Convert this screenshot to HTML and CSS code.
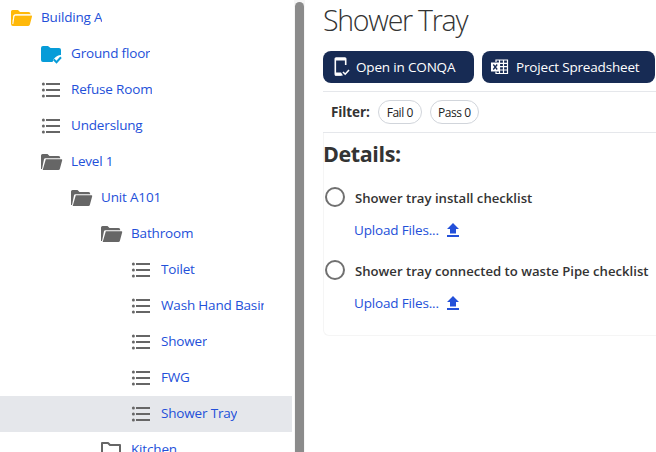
FILE: index.html
```html
<!DOCTYPE html>
<html lang="en">
<head>
<meta charset="utf-8">
<title>Shower Tray</title>
<link rel="stylesheet" href="styles.css">
</head>
<body>
<svg class="defs" width="0" height="0" aria-hidden="true">
  <symbol id="open" viewBox="0 .5 22 18"><path fill="currentColor" d="M0 15.500V2Q0 .500 1.500 .500H6.500L8.500 2.500H17.500Q19.300 2.500 19.300 4.800H4.300Q3.300 4.800 3 5.800L1 15.500Z"/><path fill="currentColor" d="M4.800 5.800H20.500Q21.400 5.800 21.200 6.700L18.900 15.200Q18.600 16.400 17.400 16.400H1.700Z"/></symbol>
  <symbol id="list" viewBox="0 0 22 18"><g fill="currentColor"><circle cx="2.400" cy="2" r="1.500"/><circle cx="2.400" cy="8" r="1.500"/><circle cx="2.400" cy="14" r="1.500"/><path d="M5 1h14v2H5zM5 7h14v2H5zM5 13h14v2H5z"/></g></symbol>
  <symbol id="upload" viewBox="0 0 12 14"><path fill="currentColor" d="M6 0L12 6H9V10.500H3V6H0ZM0 12h12v2H0z"/></symbol>
</svg>
<div class="app">
  <nav class="tree">
    <a class="row root"><svg class="icon yellow" viewBox="0 .5 22 18"><path fill="currentColor" d="M0 14.500V2Q0 .500 1.500 .500H7L9 2.500H17.500Q19.500 2.500 19.500 4.500V5H4Q2.800 5 2.500 6L1.200 13.500L3.200 6.700Q3.500 5.900 4.500 5.900H20.300Q21.200 5.900 21 6.900L18.900 15Q18.500 16.400 17.200 16.400H2Q0 16.400 0 14.500Z"/><path fill="none" stroke="#fff" stroke-width="1" d="M1.800 14.500L3 6.500Q3.300 5.300 4.500 5.300H19.500"/></svg><span>Building A</span></a>
    <a class="row l1"><svg class="icon blue" viewBox="0 0 22 18"><path fill="currentColor" d="M0 2Q0 0 2 0H7L9.500 2H18Q20 2 20 4V9Q16 9 12.800 13L11.500 16H2Q0 16 0 14Z"/><path fill="none" stroke="currentColor" stroke-width="2" d="M12.800 13.500L15.500 16.200L20 11.300"/></svg><span>Ground floor</span></a>
    <a class="row l1"><svg class="icon"><use href="#list"/></svg><span>Refuse Room</span></a>
    <a class="row l1"><svg class="icon"><use href="#list"/></svg><span>Underslung</span></a>
    <a class="row l1"><svg class="icon"><use href="#open"/></svg><span>Level 1</span></a>
    <a class="row l2"><svg class="icon"><use href="#open"/></svg><span>Unit A101</span></a>
    <a class="row l3"><svg class="icon"><use href="#open"/></svg><span>Bathroom</span></a>
    <a class="row l4"><svg class="icon"><use href="#list"/></svg><span>Toilet</span></a>
    <a class="row l4"><svg class="icon"><use href="#list"/></svg><span>Wash Hand Basin</span></a>
    <a class="row l4"><svg class="icon"><use href="#list"/></svg><span>Shower</span></a>
    <a class="row l4"><svg class="icon"><use href="#list"/></svg><span>FWG</span></a>
    <a class="row l4 selected"><svg class="icon"><use href="#list"/></svg><span>Shower Tray</span></a>
    <a class="row l3"><svg class="icon" viewBox="0 0 22 18"><path fill="none" stroke="currentColor" stroke-width="2" stroke-linejoin="round" d="M1 15V1H7L9 3H19V15Z"/></svg><span>Kitchen</span></a>
  </nav>
  <div class="track"><div class="thumb"></div></div>
  <main class="main">
    <h1>Shower Tray</h1>
    <div class="buttons">
      <button class="btn conqa"><svg width="16" height="20" viewBox="0 0 16 20"><path fill="none" stroke="#fff" stroke-width="1.600" d="M11.700 8V1.800Q11.700 1 10.900 1H2.100Q1.300 1 1.300 1.800V17.200Q1.300 18 2.100 18H7.500"/><path fill="#fff" d="M1 1h11v2.500H1zM1 15.500h6l2 3H1z"/><path fill="none" stroke="#fff" stroke-width="1.600" d="M9 15L11.200 17.200L15 13"/></svg><span>Open in CONQA</span></button>
      <button class="btn sheet"><svg width="18" height="16" viewBox="0 0 18 16"><path fill="none" stroke="#fff" stroke-width="1.200" d="M5 3V1H16.500V14.500H5V12.500M9 4.400H16.500M9 7.700H16.500M9 11H16.500M12.500 1V14.500M8.500 1V14.500"/><path fill="#fff" d="M0 3.500h8.500v9H0z"/><path stroke="#172b54" stroke-width="1.300" d="M2.300 5.500L6.200 10.500M6.200 5.500L2.300 10.500"/></svg><span>Project Spreadsheet</span></button>
    </div>
    <div class="filter"><b>Filter:</b><span class="pill fail"><span>Fail 0</span></span><span class="pill pass"><span>Pass 0</span></span></div>
    <section class="details">
      <h2>Details:</h2>
      <div class="item"><i class="ring"></i><span class="name">Shower tray install checklist</span></div>
      <a class="upload"><span>Upload Files...</span><svg width="12" height="14"><use href="#upload"/></svg></a>
      <div class="item second"><i class="ring"></i><span class="name">Shower tray connected to waste Pipe checklist</span></div>
      <a class="upload"><span>Upload Files...</span><svg width="12" height="14"><use href="#upload"/></svg></a>
    </section>
  </main>
</div>
</body>
</html>
```
FILE: styles.css
```css
* { box-sizing: border-box; }
body { margin: 0; background: #fff; overflow: hidden; font-family: "Open Sans", "Noto Sans", sans-serif; }
.defs { position: absolute; }
.app { display: flex; width: 656px; height: 452px; overflow: hidden; }
.tree { width: 292px; flex: none; }
.row { display: flex; align-items: center; gap: 8px; height: 36px; padding: 0 28px 2px 11px; color: #2350d9; font-size: 13.5px; line-height: 20px; white-space: nowrap; letter-spacing: -.17px; }
.row span { overflow: hidden; }
.l1 { padding-left: 41px; }
.l2 { padding-left: 71px; }
.l3 { padding-left: 101px; }
.l4 { padding-left: 131px; }
.selected { background: #e5e7eb; }
.icon { width: 22px; height: 18px; flex: none; color: #666; margin-top: 4px; }
.yellow { color: #ffb90a; }
.blue { color: #079cd8; }
.track { width: 13px; flex: none; background: linear-gradient(to right, #fff 2px, #f6f6f6 2px); padding: 2px 1px 0 3px; }
.thumb { width: 9px; height: 460px; border-radius: 5px; background: #8b8b8b; }
.main { flex: none; width: 351px; padding-left: 18px; color: #333; }
h1 { margin: 0; height: 51px; font-size: 28.5px; font-weight: 300; line-height: 40px; letter-spacing: -1.25px; white-space: nowrap; }
.buttons { display: flex; gap: 8px; height: 41px; border-bottom: 1px solid #e5e7eb; }
.btn { display: flex; align-items: center; height: 32px; border: 0; border-radius: 8px; background: #172b54; color: #fff; font: 13.5px/20px "Open Sans", sans-serif; white-space: nowrap; padding: 0; flex: none; letter-spacing: -.17px; }
.conqa { width: 151px; padding-left: 11px; gap: 6px; }
.sheet { width: 173px; padding-left: 9px; gap: 7px; }
.filter { display: flex; align-items: center; height: 41px; border-bottom: 1px solid #e5e7eb; padding-left: 8px; font-size: 13.5px; letter-spacing: -.1px; }
.pill { display: flex; align-items: center; justify-content: center; height: 24px; border: 1px solid #d1d5db; border-radius: 12px; color: #222; font-size: 12px; font-weight: 500; white-space: nowrap; letter-spacing: -.45px; }
.fail { width: 44px; margin-left: 8px; }
.pass { width: 49px; margin-left: 8px; }
.details { height: 203px; border: 1px solid #f5f5f5; border-top: 0; border-right: 0; border-radius: 0 0 0 6px; }
h2 { margin: 0 0 0 -1px; height: 53px; font-size: 21.5px; line-height: 42px; font-weight: 700; letter-spacing: -.4px; }
.item { display: flex; align-items: center; height: 22px; padding-left: 1px; gap: 10px; }
.ring { width: 20px; height: 20px; border: 2px solid #707070; border-radius: 50%; flex: none; }
.name { font-size: 13.15px; font-weight: 600; white-space: nowrap; padding-top: 2px; }
.upload { display: flex; align-items: center; height: 20px; margin-top: 12px; padding-left: 30px; gap: 8px; color: #2350d9; font-size: 13.5px; white-space: nowrap; letter-spacing: -.17px; }
.second { margin-top: 19px; }
```
